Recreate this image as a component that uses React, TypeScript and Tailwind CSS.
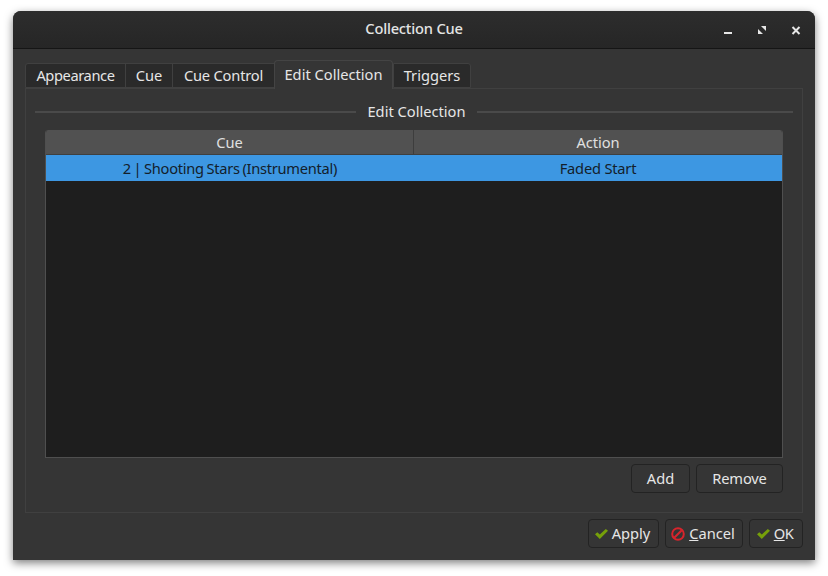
import React from 'react';

const tabs = [
  { label: 'Appearance', w: 'w-[101px]', track: 'tracking-[-0.4px]' },
  { label: 'Cue', w: 'w-[48px]', track: '' },
  { label: 'Cue Control', w: 'w-[103px]', track: 'tracking-[-0.2px]' },
  { label: 'Edit Collection', w: 'w-[119px]', track: '', active: true },
  { label: 'Triggers', w: 'w-[78px]', track: '' },
];

const Check = () => (
  <svg width="13" height="10" viewBox="0 0 13 10" className="shrink-0 mt-[2px]">
    <path d="M0 5.2 L2.3 3.2 L4.8 5.4 L10.8 0 L13 1.8 L4.8 10 Z" fill="#76a00a" />
  </svg>
);

const Stop = () => (
  <svg width="14" height="14" viewBox="0 0 14 14" className="shrink-0 mt-[2px]">
    <circle cx="7" cy="7" r="5.8" fill="none" stroke="#d8242c" strokeWidth="2" />
    <path d="M3.2 10.8 L10.8 3.2" stroke="#d8242c" strokeWidth="2" />
  </svg>
);

const Button = ({ w, children }: { w: string; children: React.ReactNode }) => (
  <div className={`${w} h-[29px] flex items-center justify-center gap-[4px] pb-[2px] rounded-[4px] border border-[#232323] bg-[#353535] text-[#e6e6e6]`}>
    {children}
  </div>
);

export default function App() {
  return (
    <div className="w-[828px] h-[576px] bg-white pt-[11px] pl-[13px] overflow-hidden font-['Noto_Sans',sans-serif] text-[14.67px] leading-[20px]">
      <div className="w-[802px] h-[549px] flex flex-col bg-[#353535] rounded-t-[8px] shadow-[0_3px_9px_rgba(0,0,0,0.5)]">
        {/* Title bar */}
        <div className="h-[38px] shrink-0 relative flex items-center justify-center pb-[3px] rounded-t-[8px] bg-gradient-to-b from-[#2d2d2d] to-[#262626] border-b border-[#151515] font-medium tracking-[-0.2px] text-[#e4e4e4]">
          Collection Cue
          <div className="absolute right-0 top-0 h-full">
            <svg width="110" height="37" viewBox="0 0 110 37">
              <rect x="19" y="21" width="8" height="2" fill="#e6e6e6" />
              <path d="M56 15 H61 V20 Z M53 23 V18 L58 23 Z" fill="#e6e6e6" />
              <path d="M87.5 16 L94.5 23 M94.5 16 L87.5 23" stroke="#e6e6e6" strokeWidth="2" />
            </svg>
          </div>
        </div>

        <div className="flex-1 pt-[11px] px-[12px]">
          {/* Tabs */}
          <div className="flex h-[28px] items-end relative z-10">
            {tabs.map((t) =>
              t.active ? (
                <div key={t.label} className={`${t.w} h-[29px] -mb-px flex items-center justify-center pb-[2px] bg-[#353535] border border-b-0 border-[#444444] rounded-t-[4px] text-[#e6e6e6]`}>
                  {t.label}
                </div>
              ) : (
                <div key={t.label} className={`${t.w} ${t.track} h-[25px] flex items-center justify-center pb-[2px] bg-[#2a2a2a] border border-[#404040] first:rounded-tl-[3px] last:rounded-tr-[3px] -mr-px text-[#e6e6e6]`}>
                  {t.label}
                </div>
              ),
            )}
          </div>

          {/* Tab panel */}
          <div className="h-[425px] border border-[#404040] px-[9px] pt-[13px]">
            <div className="flex items-center h-[20px] text-[#e6e6e6]">
              <div className="w-[321px] h-[2px] bg-[#4a4a4a]" />
              <span className="w-[121px] text-center pb-[3px]">Edit Collection</span>
              <div className="flex-1 h-[2px] bg-[#4a4a4a]" />
            </div>

            <div className="mx-[10px] mt-[8px] h-[328px] flex flex-col rounded-t-[3px] border-x border-b border-[#4f4f4f] bg-[#1e1e1e] overflow-hidden">
              <div className="flex h-[25px] shrink-0 bg-[#515151] border-b border-[#3f3f3f] text-[#e0e0e0]">
                <div className="w-[368px] flex items-center justify-center border-r border-[#3d3d3d]">Cue</div>
                <div className="flex-1 flex items-center justify-center tracking-[-0.1px]">Action</div>
              </div>
              <div className="flex h-[26px] shrink-0 bg-[#3d97e2] text-[#13202b]">
                <div className="w-[368px] flex items-center justify-center tracking-[-0.27px] [word-spacing:-0.9px]">2 | Shooting Stars (Instrumental)</div>
                <div className="flex-1 flex items-center justify-center tracking-[-0.2px]">Faded Start</div>
              </div>
            </div>

            <div className="flex justify-end gap-[6px] mt-[6px] mr-[10px]">
              <Button w="w-[59px]">Add</Button>
              <Button w="w-[87px]"><span className="tracking-[-0.15px]">Remove</span></Button>
            </div>
          </div>

          {/* Dialog buttons */}
          <div className="flex justify-end gap-[6px] mt-[6px]">
            <Button w="w-[71px]"><Check /><span className="mr-[2px]">Apply</span></Button>
            <Button w="w-[78px]"><Stop /><span className="mr-[2px]"><span className="underline">C</span>ancel</span></Button>
            <Button w="w-[54px]"><Check /><span className="mr-[2px] tracking-[-0.5px]"><span className="underline">O</span>K</span></Button>
          </div>
        </div>
      </div>
    </div>
  );
}
